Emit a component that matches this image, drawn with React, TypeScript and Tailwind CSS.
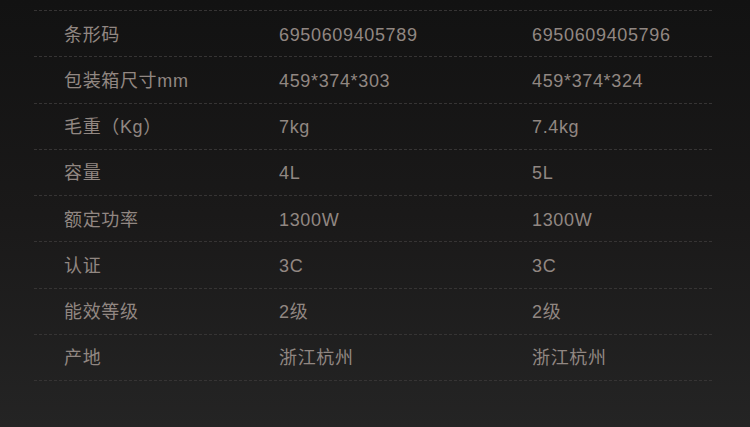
import React from "react";

interface SpecRow {
  label: string;
  a: string;
  b: string;
}

const rows: SpecRow[] = [
  { label: "条形码", a: "6950609405789", b: "6950609405796" },
  { label: "包装箱尺寸mm", a: "459*374*303", b: "459*374*324" },
  { label: "毛重（Kg）", a: "7kg", b: "7.4kg" },
  { label: "容量", a: "4L", b: "5L" },
  { label: "额定功率", a: "1300W", b: "1300W" },
  { label: "认证", a: "3C", b: "3C" },
  { label: "能效等级", a: "2级", b: "2级" },
  { label: "产地", a: "浙江杭州", b: "浙江杭州" },
];

const App: React.FC = () => {
  return (
    <div
      className="w-[750px] h-[427px] overflow-hidden bg-gradient-to-b from-[#121212] via-[#1a1919] to-[#242424] pt-[10px] text-[18px] text-[#918782] tracking-[0.65px]"
      style={{ fontFamily: '"Liberation Sans", "Noto Sans CJK SC", sans-serif' }}
    >
      <div className="mx-[34px] w-[678px] border-t border-dashed border-[#363434]">
        {rows.map((row) => (
          <div
            key={row.label}
            className="flex items-center h-[46.25px] border-b border-dashed border-[#363434] pt-[3px]"
          >
            <div className="w-[245px] pl-[30px]">{row.label}</div>
            <div className="w-[253px]">{row.a}</div>
            <div className="flex-1">{row.b}</div>
          </div>
        ))}
      </div>
    </div>
  );
};

export default App;
